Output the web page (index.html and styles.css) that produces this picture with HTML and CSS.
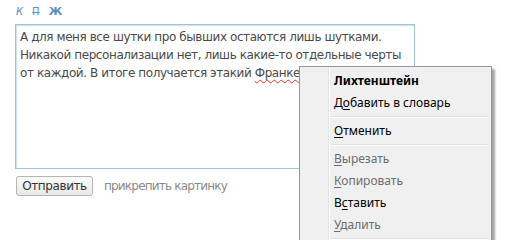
FILE: index.html
```html
<!DOCTYPE html>
<html lang="ru">
<head>
<meta charset="utf-8">
<link rel="stylesheet" href="styles.css">
</head>
<body>
<div class="editor">
  <div class="toolbar">
    <span class="tool tool-italic">К</span>
    <span class="tool tool-strike">П</span>
    <span class="tool tool-bold">Ж</span>
  </div>
  <div class="field">А для меня все шутки про бывших остаются лишь шутками.<br>Никакой персонализации нет, лишь какие-то отдельные черты<br>от каждой. В итоге получается этакий <span class="misspelled">Франкенштейн</span></div>
  <div class="actions">
    <button class="send">Отправить</button>
    <span class="attach">прикрепить картинку</span>
  </div>
</div>

<div class="menu">
  <div class="item bold">Лихтенштейн</div>
  <div class="item">Д<u>о</u>бавить в словарь</div>
  <div class="sep"></div>
  <div class="item"><u>О</u>тменить</div>
  <div class="sep"></div>
  <div class="item disabled"><u>В</u>ырезать</div>
  <div class="item disabled"><u>К</u>опировать</div>
  <div class="item">В<u>с</u>тавить</div>
  <div class="item disabled"><u>У</u>далить</div>
  <div class="sep"></div>
</div>
</body>
</html>
```
FILE: styles.css
```css
html, body {
  margin: 0;
  padding: 0;
  background: #ffffff;
}
body {
  font-family: "DejaVu Sans", Tahoma, sans-serif;
  width: 529px;
  height: 240px;
  overflow: hidden;
  position: relative;
}
.editor {
  padding: 5px 0 0 15px;
}
.toolbar {
  display: flex;
  align-items: center;
  gap: 9px;
  height: 14px;
  padding-left: 1px;
  margin-bottom: 5px;
}
.tool {
  font-size: 10px;
  color: #5b8fbf;
  line-height: 14px;
}
.tool-italic { font-style: italic; }
.tool-strike { text-decoration: line-through; }
.tool-bold { font-weight: bold; font-size: 11px; }

.field {
  box-sizing: border-box;
  width: 400px;
  height: 145px;
  border: 1px solid #9fc4dc;
  box-shadow: inset 1px 1px 1px #c9dfee;
  padding: 3px 4px;
  font-size: 12px;
  letter-spacing: -0.42px;
  line-height: 18px;
  color: #4a4a4a;
  white-space: nowrap;
  overflow: hidden;
}
.misspelled {
  text-decoration: underline wavy #e03030;
  text-decoration-thickness: 1px;
  text-underline-offset: 2px;
}
.actions {
  display: flex;
  align-items: center;
  gap: 11px;
  margin-top: 7px;
  padding-left: 1px;
}
.send {
  box-sizing: border-box;
  height: 20px;
  width: 77px;
  padding: 0;
  border: 1px solid #b5b5b5;
  border-radius: 3px;
  background: linear-gradient(#fbfbfb, #e8e8e8);
  font-family: "DejaVu Sans", Tahoma, sans-serif;
  font-size: 12px;
  letter-spacing: -0.4px;
  color: #333;
}
.attach {
  font-size: 12px;
  letter-spacing: -0.8px;
  color: #8a8a8a;
}

.menu {
  position: absolute;
  left: 299px;
  top: 66px;
  width: 193px;
  box-sizing: border-box;
  border: 1px solid #979797;
  background: #f0f0f0 linear-gradient(to right, transparent 28px, #e2e3e3 28px, #e2e3e3 29px, #ffffff 29px, #ffffff 30px, transparent 30px);
  box-shadow: 3px 3px 2px rgba(0, 0, 0, 0.35);
  padding: 3px 2px;
  font-family: "Noto Sans", "Open Sans", sans-serif;
  font-size: 12px;
  color: #000;
}
.item {
  height: 22px;
  line-height: 22px;
  padding-left: 32px;
}
.item u {
  text-underline-offset: 2px;
}
.bold { font-weight: bold; }
.disabled { color: #6d6d6d; }
.sep {
  height: 6px;
  margin-left: 29px;
  margin-right: 1px;
  background: linear-gradient(transparent 2px, #e0e0e0 2px, #e0e0e0 3px, #ffffff 3px, #ffffff 4px, transparent 4px);
}
```
